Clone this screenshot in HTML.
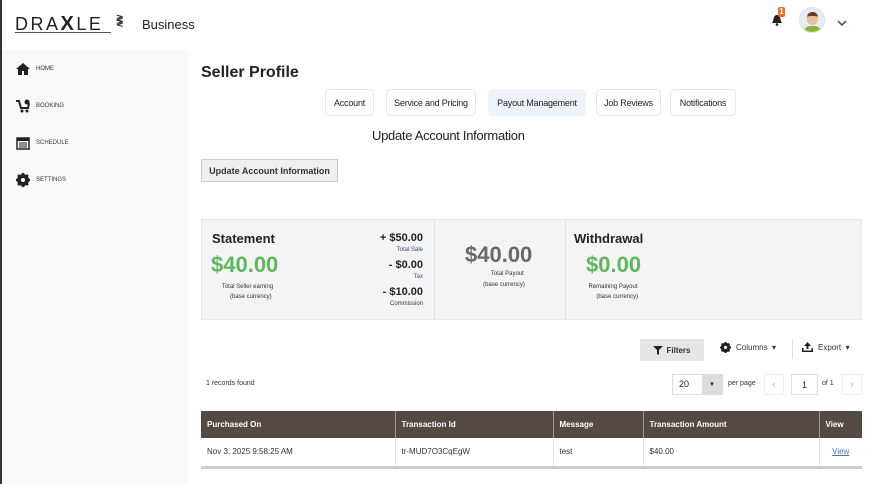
<!DOCTYPE html>
<html><head><style>
*{box-sizing:border-box;margin:0;padding:0}
body{width:872px;height:484px;overflow:hidden;background:#fff;font-family:"Liberation Sans",sans-serif;position:relative;color:#222}
.a{position:absolute}
.side{left:0;top:50px;width:188px;height:434px;background:#f8f9fa;border-left:2px solid #333}
.nav{left:16px;font-size:6px;color:#333;display:flex;align-items:center;gap:6px}
.tab{top:89px;height:27px;border:1px solid #e6e6e6;border-radius:5px;font-size:9px;display:flex;align-items:center;justify-content:center;background:#fff;letter-spacing:-0.2px}
.sm{font-size:7px;color:#333}
th,td{font-size:8px;text-align:left;padding:0 6px}
th{color:#fff;background:#544a43;height:27px;border-right:1px solid #999}
td{height:29px;border-right:1px solid #e6e6e6;color:#333}
</style></head><body>
<div class="a" style="left:0;top:0;width:2px;height:484px;background:#333"></div>
<div class="a" style="left:15px;top:14px;font-size:18px;letter-spacing:2.5px;color:#222;font-weight:400;line-height:20px">DRA<b style="font-size:20px">X</b>LE</div>
<div class="a" style="left:15px;top:32px;width:96px;height:1px;background:#555"></div>
<div class="a" style="left:116px;top:16px;font-size:9px;color:#333;line-height:5px;font-weight:bold">≷<br>≷</div>
<div class="a" style="left:142px;top:17px;font-size:13px;color:#222">Business</div>
<div class="a side"></div>
<div class="a nav" style="top:63px"><svg width="14" height="12" viewBox="0 0 14 12"><path d="M7 0L0 6h2v6h4V8h2v4h4V6h2z" fill="#222"/></svg>HOME</div>
<div class="a nav" style="top:99px"><svg width="14" height="14" viewBox="0 0 14 14"><path d="M0 2h3l2 7h7l1-5" stroke="#222" stroke-width="2" fill="none"/><circle cx="6" cy="12" r="1.5" fill="#222"/><circle cx="11" cy="12" r="1.5" fill="#222"/><circle cx="11" cy="3" r="2.5" fill="#222"/></svg>BOOKING</div>
<div class="a nav" style="top:136px"><svg width="14" height="14" viewBox="0 0 14 14"><rect x="1" y="2" width="12" height="11" fill="none" stroke="#222" stroke-width="1.5"/><rect x="1" y="2" width="12" height="3" fill="#222"/><path d="M3 7h8M3 9h8M3 11h8" stroke="#222"/></svg>SCHEDULE</div>
<div class="a nav" style="top:173px"><svg width="14" height="14" viewBox="0 0 14 14"><circle cx="7" cy="7" r="4.5" fill="none" stroke="#222" stroke-width="3"/><path d="M7 0v14M0 7h14M2 2l10 10M12 2L2 12" stroke="#222" stroke-width="2.5"/><circle cx="7" cy="7" r="2" fill="#f8f9fa"/></svg>SETTINGS</div>
<svg class="a" style="left:770px;top:12px" width="14" height="14" viewBox="0 0 14 14"><path d="M2 11c2-2 1-8 5-8s3 6 5 8z" fill="#222"/><circle cx="7" cy="12.5" r="1.3" fill="#222"/></svg>
<div class="a" style="left:778px;top:7px;width:7px;height:10px;background:#f26b1d;color:#fff;font-size:8px;font-weight:bold;text-align:center;line-height:10px;border-radius:2px">1</div>
<div class="a" style="left:799px;top:7px;width:26px;height:26px;border-radius:50%;background:#e6eef0;border:1px solid #dde;overflow:hidden"><div class="a" style="left:7px;top:4px;width:11px;height:13px;border-radius:5px;background:#e8c09a;border-top:4px solid #6b3b1f"></div><div class="a" style="left:4px;top:18px;width:17px;height:10px;border-radius:6px 6px 0 0;background:#8db33a"></div></div>
<svg class="a" style="left:837px;top:20px" width="10" height="7" viewBox="0 0 10 7"><path d="M1 1l4 4 4-4" stroke="#2a4a7a" stroke-width="1.5" fill="none"/></svg>
<div class="a" style="left:201px;top:64px;font-size:16px;font-weight:bold;color:#222">Seller Profile</div>
<div class="a tab" style="left:325px;width:49px">Account</div>
<div class="a tab" style="left:386px;width:90px">Service and Pricing</div>
<div class="a tab" style="left:488px;width:98px;background:#eef2fb;border-color:#eef2fb">Payout Management</div>
<div class="a tab" style="left:596px;width:65px">Job Reviews</div>
<div class="a tab" style="left:670px;width:66px">Notifications</div>
<div class="a" style="left:372px;top:128px;font-size:13px;color:#222;letter-spacing:-0.3px">Update Account Information</div>
<div class="a" style="left:201px;top:159px;width:137px;height:23px;background:#efefef;border:1px solid #ccc;font-size:9px;font-weight:bold;display:flex;align-items:center;justify-content:center;color:#333">Update Account Information</div>
<div class="a" style="left:201px;top:219px;width:661px;height:101px;background:#f4f4f4;border:1px solid #e8e8e8"></div>
<div class="a" style="left:434px;top:220px;width:1px;height:99px;background:#e2e2e2"></div>
<div class="a" style="left:565px;top:220px;width:1px;height:99px;background:#e2e2e2"></div>
<div class="a" style="left:212px;top:231px;font-size:13px;font-weight:bold">Statement</div>
<div class="a" style="left:211px;top:252px;font-size:22px;font-weight:bold;color:#5cb85c">$40.00</div>
<div class="a sm" style="left:200px;top:282px;width:95px;text-align:center;line-height:10px;font-size:6px">Total Seller earning<br>&nbsp;&nbsp;&nbsp;&nbsp;(base currency)</div>
<div class="a" style="left:330px;top:233px;width:93px;text-align:right;line-height:1">
<div style="font-size:11px;font-weight:bold">+ $50.00</div><div style="font-size:6px;color:#2a4a9a;margin:3px 0 7px">Total Sale</div>
<div style="font-size:11px;font-weight:bold">- $0.00</div><div style="font-size:6px;color:#2a4a9a;margin:3px 0 7px">Tax</div>
<div style="font-size:11px;font-weight:bold">- $10.00</div><div style="font-size:6px;color:#333;margin-top:3px">Commission</div></div>
<div class="a" style="left:465px;top:242px;font-size:22px;font-weight:bold;color:#6e6763">$40.00</div>
<div class="a" style="left:470px;top:269px;width:68px;text-align:center;font-size:6px;line-height:11px;color:#333">&nbsp;&nbsp;&nbsp;&nbsp;Total Payout<br>(base currency)</div>
<div class="a" style="left:574px;top:231px;font-size:13px;font-weight:bold">Withdrawal</div>
<div class="a" style="left:586px;top:252px;font-size:22px;font-weight:bold;color:#5cb85c">$0.00</div>
<div class="a" style="left:578px;top:282px;width:70px;text-align:center;font-size:6px;line-height:10px;color:#333">Remaining Payout<br>&nbsp;&nbsp;&nbsp;&nbsp;&nbsp;(base currency)</div>
<div class="a" style="left:640px;top:339px;width:64px;height:22px;background:#e6e6e6;font-size:8px;font-weight:bold;display:flex;align-items:center;justify-content:center;gap:3px;color:#333"><svg width="10" height="9" viewBox="0 0 10 9"><path d="M0 0h10L6 4v5L4 8V4z" fill="#222"/></svg>Filters</div>
<div class="a" style="left:720px;top:342px;font-size:8px;color:#333;display:flex;gap:5px;align-items:center"><svg width="11" height="11" viewBox="0 0 14 14"><circle cx="7" cy="7" r="4.5" fill="none" stroke="#222" stroke-width="3"/><path d="M7 0v14M0 7h14M2 2l10 10M12 2L2 12" stroke="#222" stroke-width="2.5"/><circle cx="7" cy="7" r="2" fill="#fff"/></svg>Columns &nbsp;▾</div>
<div class="a" style="left:792px;top:339px;width:1px;height:20px;background:#ddd"></div>
<div class="a" style="left:802px;top:342px;font-size:8px;color:#333;display:flex;gap:5px;align-items:center"><svg width="11" height="10" viewBox="0 0 11 10"><path d="M5.5 0L2 4h2.5v3h2V4H9zM0 6v4h11V6H9.5v2.5h-8V6z" fill="#222"/></svg>Export &nbsp;▾</div>
<div class="a sm" style="left:206px;top:380px">1 records found</div>
<div class="a" style="left:672px;top:374px;width:51px;height:21px;border:1px solid #ddd;font-size:9px;padding:4px 6px">20</div>
<div class="a" style="left:702px;top:375px;width:20px;height:19px;background:#ddd;font-size:7px;text-align:center;line-height:19px">▾</div>
<div class="a sm" style="left:728px;top:380px">per page</div>
<div class="a" style="left:764px;top:374px;width:20px;height:21px;border:1px solid #eee;color:#bbb;font-size:11px;text-align:center;line-height:20px">&lsaquo;</div>
<div class="a" style="left:791px;top:374px;width:27px;height:21px;border:1px solid #ddd;font-size:9px;text-align:center;line-height:20px">1</div>
<div class="a sm" style="left:822px;top:380px">of 1</div>
<div class="a" style="left:842px;top:374px;width:20px;height:21px;border:1px solid #eee;color:#bbb;font-size:11px;text-align:center;line-height:20px">&rsaquo;</div>
<table class="a" style="left:201px;top:411px;width:661px;border-collapse:collapse;border-bottom:3px solid #ccc">
<tr><th style="width:194px">Purchased On</th><th style="width:158px">Transaction Id</th><th style="width:90px">Message</th><th style="width:176px">Transaction Amount</th><th style="border-right:0">View</th></tr>
<tr><td>Nov 3, 2025 9:58:25 AM</td><td>tr-MUD7O3CqEgW</td><td>test</td><td>$40.00</td><td style="border-right:0;text-align:center"><u style="color:#3a7bd5">View</u></td></tr>
</table>
</body></html>
